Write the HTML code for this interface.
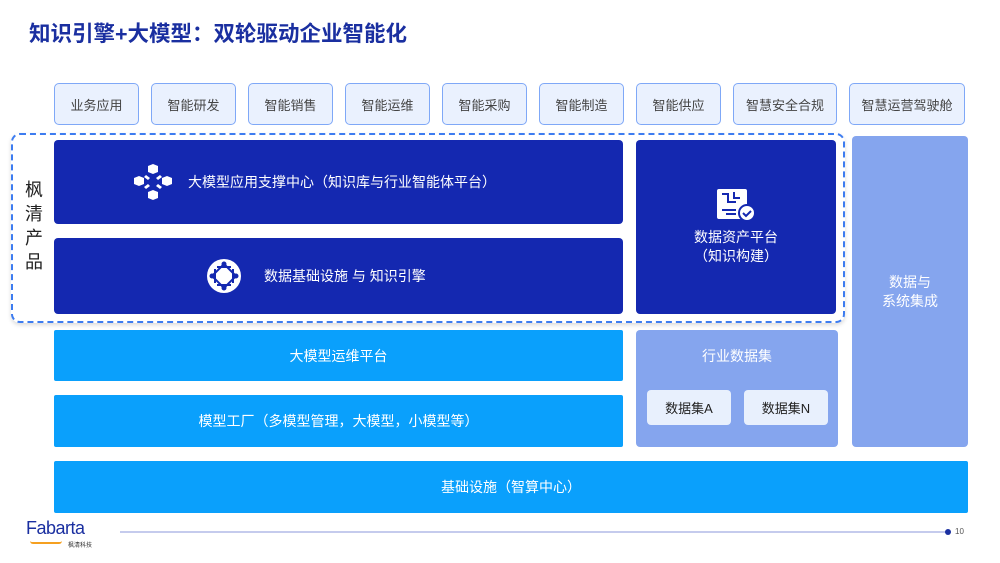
<!DOCTYPE html>
<html><head><meta charset="utf-8"><style>
*{margin:0;padding:0;box-sizing:border-box}
body{width:1000px;height:563px;background:#fff;position:relative;overflow:hidden;font-family:"Liberation Sans","Noto Sans CJK SC",sans-serif}
.a{position:absolute;display:flex;align-items:center;justify-content:center;text-align:center}
.top{top:83px;height:42px;background:#eaf1fe;border:1.5px solid #7fa8f7;border-radius:5px;font-size:13px;color:#444}
.dk{background:#1428b0;color:#fff;border-radius:4px;font-size:14px}
.lt{background:#85a5ee;color:#fff;border-radius:4px;font-size:14px}
.bl{background:#0aa0fc;color:#fff;font-size:14px;border-radius:2px}
.ds{background:#e8f0fd;border-radius:4px;font-size:13px;color:#222}
</style></head><body>
<div style="position:absolute;left:29px;top:17px;font-size:21.5px;font-weight:bold;color:#1a2fa0">知识引擎+大模型：双轮驱动企业智能化</div>

<div class="a top" style="left:54px;width:85px">业务应用</div>
<div class="a top" style="left:151px;width:85px">智能研发</div>
<div class="a top" style="left:248px;width:85px">智能销售</div>
<div class="a top" style="left:345px;width:85px">智能运维</div>
<div class="a top" style="left:442px;width:85px">智能采购</div>
<div class="a top" style="left:539px;width:85px">智能制造</div>
<div class="a top" style="left:636px;width:85px">智能供应</div>
<div class="a top" style="left:733px;width:104px">智慧安全合规</div>
<div class="a top" style="left:849px;width:116px">智慧运营驾驶舱</div>

<div style="position:absolute;left:11px;top:133px;width:834px;height:190px;border:2px dashed #3d7cf0;border-radius:9px;box-shadow:0 2px 4px rgba(0,0,0,.15)"></div>
<div style="position:absolute;left:25px;top:178px;font-size:18px;line-height:24px;width:20px;color:#222">枫<br>清<br>产<br>品</div>

<div class="a dk" style="left:54px;top:140px;width:569px;height:84px;justify-content:flex-start;padding-left:79px">
<svg width="40" height="36" viewBox="0 0 40 36" style="margin-right:15px"><g fill="#fff"><path d="M15 2l5-2 5 2v6l-5 2-5-2z"/><path d="M15 28l5-2 5 2v6l-5 2-5-2z"/><path d="M1 14l5-2 5 2v6l-5 2-5-2z"/><path d="M29 14l5-2 5 2v6l-5 2-5-2z"/><path d="M13 11l4 3-2 2-4-3zM27 11l-4 3 2 2 4-3zM13 25l4-3-2-2-4 3zM27 25l-4-3 2-2 4 3z"/></g></svg>
大模型应用支撑中心（知识库与行业智能体平台）</div>
<div class="a dk" style="left:54px;top:238px;width:569px;height:76px;justify-content:flex-start;padding-left:152px">
<svg width="36" height="36" viewBox="0 0 36 36" style="margin-right:22px"><circle cx="18" cy="18" r="17" fill="#fff"/><g stroke="#1428b0" stroke-width="2" fill="none"><path d="M18 6L30 18 18 30 6 18Z"/><path d="M11 9l14 0M9 11v14M27 11v14M11 27h14"/></g><g fill="#1428b0"><circle cx="18" cy="6" r="2.5"/><circle cx="30" cy="18" r="2.5"/><circle cx="18" cy="30" r="2.5"/><circle cx="6" cy="18" r="2.5"/></g></svg>
数据基础设施 与 知识引擎</div>

<div class="a dk" style="left:636px;top:140px;width:200px;height:174px;flex-direction:column;line-height:19px">
<svg width="40" height="34" viewBox="0 0 40 34" style="margin-bottom:6px"><rect x="1" y="1" width="30" height="30" rx="2" fill="#fff"/><g stroke="#1428b0" stroke-width="2" fill="none"><path d="M6 6h6v8h8M18 4v6h6M6 22h14M10 26h10"/></g><circle cx="31" cy="25" r="8" fill="#fff" stroke="#1428b0" stroke-width="2"/><path d="M27 25l3 3 5-5" stroke="#1428b0" stroke-width="2" fill="none"/></svg>
数据资产平台<br>（知识构建）</div>

<div class="a lt" style="left:852px;top:136px;width:116px;height:311px;line-height:19px">数据与<br>系统集成</div>

<div class="a bl" style="left:54px;top:330px;width:569px;height:51px">大模型运维平台</div>
<div class="a bl" style="left:54px;top:395px;width:569px;height:52px">模型工厂（多模型管理，大模型，小模型等）</div>

<div class="lt" style="position:absolute;left:636px;top:330px;width:202px;height:117px"></div>
<div style="position:absolute;left:636px;top:346px;width:202px;text-align:center;color:#fff;font-size:14px">行业数据集</div>
<div class="a ds" style="left:647px;top:390px;width:84px;height:35px">数据集A</div>
<div class="a ds" style="left:744px;top:390px;width:84px;height:35px">数据集N</div>

<div class="a bl" style="left:54px;top:461px;width:914px;height:52px">基础设施（智算中心）</div>

<div style="position:absolute;left:120px;top:531px;width:830px;height:2px;background:#c5cbed"></div>
<div style="position:absolute;left:945px;top:529px;width:6px;height:6px;border-radius:50%;background:#1a2fa0"></div>
<div style="position:absolute;left:955px;top:527px;font-size:8px;color:#555">10</div>
<div style="position:absolute;left:26px;top:518px;font-size:18px;color:#1a2fa0;letter-spacing:-.5px">Fabarta</div>
<div style="position:absolute;left:30px;top:541px;width:32px;height:3px;border-bottom:2px solid #f5a020;border-radius:0 0 20px 20px"></div>
<div style="position:absolute;left:68px;top:540px;font-size:6px;color:#333">枫清科技</div>
</body></html>
